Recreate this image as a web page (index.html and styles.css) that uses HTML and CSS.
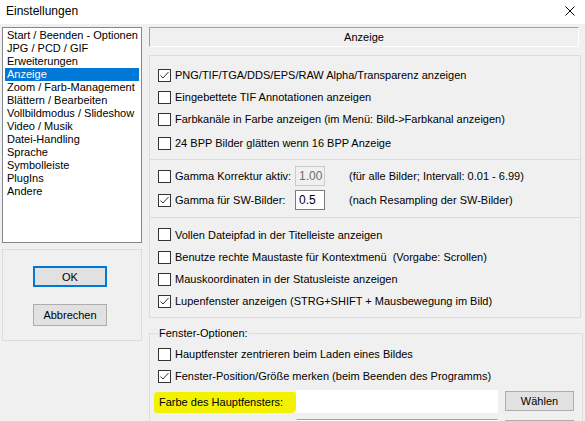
FILE: index.html
```html
<!DOCTYPE html>
<html lang="de">
<head>
<meta charset="utf-8">
<title>Einstellungen</title>
<link rel="stylesheet" href="styles.css">
</head>
<body>
<div class="window">
  <div class="titlebar">
    <span class="title">Einstellungen</span>
    <svg class="close" width="10" height="10" viewBox="0 0 10 10"><path d="M0.5 0.5L9.5 9.5M9.5 0.5L0.5 9.5" stroke="#000" stroke-width="1" fill="none"/></svg>
  </div>
  <div class="main">
    <div class="left">
      <ul class="list">
        <li>Start / Beenden - Optionen</li>
        <li>JPG / PCD / GIF</li>
        <li>Erweiterungen</li>
        <li class="sel">Anzeige</li>
        <li>Zoom / Farb-Management</li>
        <li>Blättern / Bearbeiten</li>
        <li>Vollbildmodus / Slideshow</li>
        <li>Video / Musik</li>
        <li>Datei-Handling</li>
        <li>Sprache</li>
        <li>Symbolleiste</li>
        <li>PlugIns</li>
        <li>Andere</li>
      </ul>
      <div class="btnpanel">
        <button class="btn ok">OK</button>
        <button class="btn">Abbrechen</button>
      </div>
    </div>
    <div class="right">
      <div class="header">Anzeige</div>
      <div class="box">
        <div class="sec s1">
          <div class="row"><span class="cb on"><svg width="11" height="11" viewBox="0 0 11 11"><path d="M1.5 5.5L4 8L9.5 2" stroke="#333" stroke-width="1" fill="none"/></svg></span>PNG/TIF/TGA/DDS/EPS/RAW Alpha/Transparenz anzeigen</div>
          <div class="row"><span class="cb"></span>Eingebettete TIF Annotationen anzeigen</div>
          <div class="row"><span class="cb"></span>Farbkanäle in Farbe anzeigen (im Menü: Bild-&gt;Farbkanal anzeigen)</div>
          <div class="row r4"><span class="cb"></span>24 BPP Bilder glätten wenn 16 BPP Anzeige</div>
        </div>
        <div class="sec s2">
          <div class="row"><span class="lbl"><span class="cb"></span>Gamma Korrektur aktiv:</span><span class="field dis">1.00</span><span class="note">(für alle Bilder; Intervall: 0.01 - 6.99)</span></div>
          <div class="row"><span class="lbl"><span class="cb on"><svg width="11" height="11" viewBox="0 0 11 11"><path d="M1.5 5.5L4 8L9.5 2" stroke="#333" stroke-width="1" fill="none"/></svg></span>Gamma für SW-Bilder:</span><span class="field">0.5</span><span class="note">(nach Resampling der SW-Bilder)</span></div>
        </div>
        <div class="sec s3">
          <div class="row"><span class="cb"></span>Vollen Dateipfad in der Titelleiste anzeigen</div>
          <div class="row"><span class="cb"></span>Benutze rechte Maustaste für Kontextmenü&nbsp; (Vorgabe: Scrollen)</div>
          <div class="row"><span class="cb"></span>Mauskoordinaten in der Statusleiste anzeigen</div>
          <div class="row"><span class="cb on"><svg width="11" height="11" viewBox="0 0 11 11"><path d="M1.5 5.5L4 8L9.5 2" stroke="#333" stroke-width="1" fill="none"/></svg></span>Lupenfenster anzeigen (STRG+SHIFT + Mausbewegung im Bild)</div>
        </div>
      </div>
      <fieldset class="group">
        <legend>Fenster-Optionen:</legend>
        <div class="row"><span class="cb"></span>Hauptfenster zentrieren beim Laden eines Bildes</div>
        <div class="row"><span class="cb on"><svg width="11" height="11" viewBox="0 0 11 11"><path d="M1.5 5.5L4 8L9.5 2" stroke="#333" stroke-width="1" fill="none"/></svg></span>Fenster-Position/Größe merken (beim Beenden des Programms)</div>
        <div class="colorrow">
          <span class="mark">Farbe des Hauptfensters:</span>
          <span class="cfield"></span>
          <button class="btn small">Wählen</button>
        </div>
        <div class="colorrow next">
          <span class="spacer"></span>
          <span class="cfield gray"></span>
          <button class="btn small"></button>
        </div>
      </fieldset>
    </div>
  </div>
</div>
</body>
</html>
```

FILE: styles.css
```css
* { box-sizing: border-box; }
html, body { margin: 0; padding: 0; }
body {
  width: 585px;
  height: 421px;
  overflow: hidden;
  background: #f0f0f0;
  font-family: "Liberation Sans", Arial, sans-serif;
  font-size: 11px;
  color: #000;
}
.window { width: 585px; height: 421px; overflow: hidden; }
.titlebar {
  height: 24px;
  background: #fff;
  display: flex;
  align-items: center;
  justify-content: space-between;
  padding: 0 10px 3px 6px;
}
.title { font-size: 12px; }
.close { display: block; margin-top: 1px; }

.main {
  display: flex;
  padding: 3px 0 0 2px;
  gap: 7px;
}
.left { width: 140px; display: flex; flex-direction: column; gap: 6px; flex: none; }
.list {
  margin: 0;
  padding: 1px 1px 0 1px;
  list-style: none;
  height: 216px;
  background: #fff;
  border: 1px solid #828790;
}
.list li {
  height: 13px;
  line-height: 13px;
  padding-left: 2px;
  margin: 0 1px;
  white-space: nowrap;
}
.list li.sel { background: #0078d7; color: #fff; }

.btnpanel {
  height: 92px;
  border: 1px solid #dcdcdc;
  display: flex;
  flex-direction: column;
  align-items: flex-start;
  padding: 16px 0 0 30px;
  gap: 17px;
}
.btn {
  font-family: inherit;
  font-size: 11px;
  color: #000;
  background: #e1e1e1;
  border: 1px solid #adadad;
  width: 74px;
  height: 22px;
  padding: 0;
  border-radius: 0;
}
.btn.ok { border: 2px solid #0078d7; height: 21px; }

.right { width: 432px; flex: none; display: flex; flex-direction: column; }
.header {
  height: 20px;
  width: 430px;
  border-top: 1px solid #a0a0a0;
  border-left: 1px solid #a0a0a0;
  border-bottom: 1px solid #fff;
  border-right: 1px solid #fff;
  text-align: center;
  line-height: 18px;
}
.box {
  margin-top: 8px;
  border: 1px solid #dcdcdc;
  border-bottom: none;
}
.sec { border-bottom: 1px solid #dcdcdc; display: flex; flex-direction: column; padding-left: 8px; }
.s1 { height: 104px; padding-top: 8px; }
.s1 .r4 { margin-top: 2px; }
.s2 { height: 58px; padding-top: 5px; gap: 2px; }
.s3 { height: 100px; padding-top: 5px; }
.row { height: 22px; display: flex; align-items: center; white-space: nowrap; }
.s3 .row:first-child { height: 23px; }
.cb {
  width: 13px;
  height: 13px;
  border: 1px solid #333;
  background: #fff;
  margin-right: 4px;
  flex: none;
  display: flex;
  align-items: center;
  justify-content: center;
}
.cb svg { display: block; }
.lbl { display: flex; align-items: center; width: 137px; }
.field {
  width: 30px;
  height: 20px;
  border: 1px solid #7a7a7a;
  background: #fff;
  padding-left: 3px;
  line-height: 18px;
  font-size: 12px;
}
.field.dis { border-color: #cccccc; background: #f0f0f0; color: #6d6d6d; }
.note { margin-left: 24px; }

.group {
  margin: 9px 0 0 0;
  padding: 0 8px;
  border: 1px solid #dcdcdc;
  height: 120px;
}
.group legend { padding: 0 1px; line-height: 13px; }
.group .row:first-of-type { margin-top: 3px; }
.colorrow { display: flex; align-items: flex-start; margin-top: 3px; }
.colorrow.next { margin-top: 6px; }
.mark {
  width: 142px;
  height: 21px;
  margin-left: -4px;
  padding: 2px 0 0 5px;
  line-height: 16px;
  margin-top: 2px;
  background: #f2f200;
  border-radius: 4px 2px 5px 3px;
}
.spacer { width: 138px; }
.cfield {
  width: 202px;
  height: 23px;
  background: #fff;
  border: 1px solid #fff;
}
.cfield.gray { border-top-color: #a0a0a0; }
.btn.small { width: 69px; height: 20px; margin-left: 7px; margin-top: 1px; }
```
